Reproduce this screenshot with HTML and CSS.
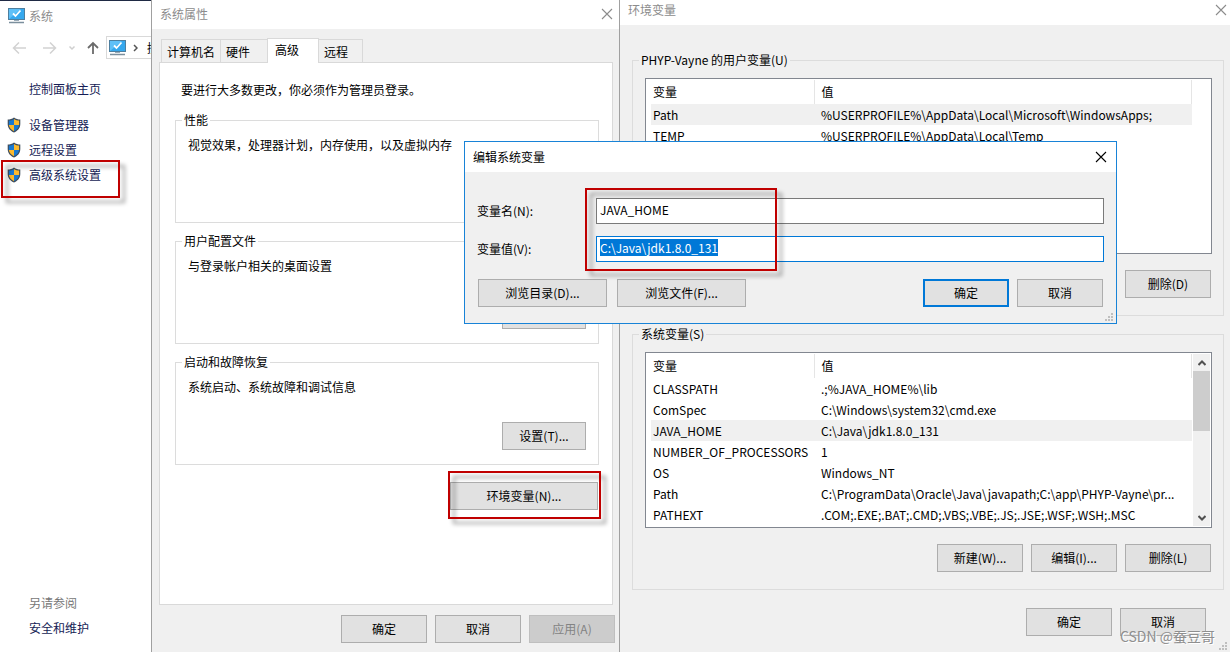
FILE: index.html
```html
<!DOCTYPE html>
<html lang="zh-CN">
<head>
    <meta charset="UTF-8">
    <meta name="viewport" content="width=device-width, initial-scale=1.0">
    <title>环境变量</title>
    <link rel="stylesheet" href="styles.css">
</head>
<body>
    <svg class="symbols" aria-hidden="true">
        <symbol id="monitor" viewBox="0 0 17 16">
            <rect x="0.5" y="0.5" width="16" height="11" fill="#35a8ee" stroke="#4d7f9f"/>
            <path d="M1 11V1h12z" fill="#5fc0f7"/>
            <path d="M5 5.5l2.500 2.500 5-5.500" fill="none" stroke="#fff" stroke-width="1.800"/>
            <path d="M6 12h5v1H6z" fill="#9aabb8"/>
            <path d="M1 14.500h15" stroke="#7b8f9d" stroke-width="1.500"/>
        </symbol>
        <symbol id="shield" viewBox="0 0 14 16">
            <path d="M7 0.500C5 2 3 2.500 0.700 2.500V7c0 4.500 3 7 6.300 8.500 3.300-1.500 6.300-4 6.300-8.500V2.500C11 2.500 9 2 7 0.500z" fill="#3f4d5c"/>
            <path d="M7 1.900C5.300 3 3.700 3.400 1.900 3.500V8H7z" fill="#1879d2"/>
            <path d="M7 1.900C8.700 3 10.300 3.400 12.100 3.500V8H7z" fill="#fdb92c"/>
            <path d="M1.900 8c.4 3 2.300 4.900 5.100 6.200V8z" fill="#fdb92c"/>
            <path d="M12.100 8c-.4 3-2.300 4.900-5.100 6.200V8z" fill="#1879d2"/>
        </symbol>
        <symbol id="close" viewBox="0 0 12 12">
            <path d="M1 1l10 10M11 1L1 11" fill="none" stroke="currentColor" stroke-width="1.100"/>
        </symbol>
        <symbol id="grip" viewBox="0 0 8 8">
            <path d="M6 0h2v2H6zM3 3h2v2H3zM6 3h2v2H6zM0 6h2v2H0zM3 6h2v2H3zM6 6h2v2H6z" fill="#bfbfbf"/>
        </symbol>
    </svg>

    <div class="desktop">
        <!-- 系统 -->
        <aside class="system">
            <div class="system-title">
                <svg class="monitor"><use href="#monitor"/></svg>
                <span>系统</span>
            </div>
            <div class="toolbar">
                <svg class="arrows" viewBox="0 0 88 14" fill="none">
                    <path d="M14 7H1.500M7 1.500L1.500 7l5.500 5.500" stroke="#d2d2d2" stroke-width="1.500"/>
                    <path d="M31 7h12.500M38 1.500L43.500 7 38 12.500" stroke="#d2d2d2" stroke-width="1.500"/>
                    <path d="M57.500 5.500l2.500 2.500 2.500-2.500" stroke="#cfcfcf" stroke-width="1.500"/>
                    <path d="M81 13V2M76 7l5-5 5 5" stroke="#6b6b6b" stroke-width="1.800"/>
                </svg>
                <div class="address">
                    <svg class="monitor"><use href="#monitor"/></svg>
                    <svg class="crumb" viewBox="0 0 5 8"><path d="M1 1l3 3-3 3" fill="none" stroke="#555" stroke-width="1.500"/></svg>
                    <span>控</span>
                </div>
            </div>
            <nav class="side-nav">
                <a class="home" href="#">控制面板主页</a>
                <a href="#"><svg class="shield"><use href="#shield"/></svg>设备管理器</a>
                <a href="#"><svg class="shield"><use href="#shield"/></svg>远程设置</a>
                <a href="#"><svg class="shield"><use href="#shield"/></svg>高级系统设置<span class="mark mark-side"></span></a>
            </nav>
            <div class="see-also">
                <p>另请参阅</p>
                <a href="#">安全和维护</a>
            </div>
        </aside>

        <!-- 系统属性 -->
        <section class="props">
            <header class="title-bar">
                <span>系统属性</span>
                <button class="close" aria-label="关闭"><svg><use href="#close"/></svg></button>
            </header>
            <div class="props-body">
                <div class="tabs" role="tablist">
                    <button class="tab" role="tab">计算机名</button>
                    <button class="tab tab-wide" role="tab">硬件</button>
                    <button class="tab active" role="tab" aria-selected="true">高级</button>
                    <button class="tab tab-last" role="tab">远程</button>
                </div>
                <div class="tab-panel">
                    <p class="notice">要进行大多数更改，你必须作为管理员登录。</p>
                    <fieldset class="group">
                        <legend>性能</legend>
                        <p>视觉效果，处理器计划，内存使用，以及虚拟内存</p>
                    </fieldset>
                    <fieldset class="group">
                        <legend>用户配置文件</legend>
                        <p>与登录帐户相关的桌面设置</p>
                        <button class="btn" aria-label="设置"></button>
                    </fieldset>
                    <fieldset class="group">
                        <legend>启动和故障恢复</legend>
                        <p>系统启动、系统故障和调试信息</p>
                        <button class="btn">设置(T)...</button>
                    </fieldset>
                    <div class="env-row">
                        <button class="btn env-btn">环境变量(N)...</button>
                        <span class="mark mark-env"></span>
                    </div>
                </div>
                <div class="buttons props-buttons">
                    <button class="btn">确定</button>
                    <button class="btn">取消</button>
                    <button class="btn" disabled>应用(A)</button>
                </div>
            </div>
        </section>

        <!-- 环境变量 -->
        <section class="env">
            <header class="title-bar">
                <span>环境变量</span>
                <button class="close" aria-label="关闭"><svg><use href="#close"/></svg></button>
            </header>
            <div class="env-body">
                <fieldset class="vars">
                    <legend>PHYP-Vayne 的用户变量(U)</legend>
                    <div class="list">
                        <table>
                            <thead>
                                <tr><th class="name">变量</th><th>值</th></tr>
                            </thead>
                            <tbody>
                                <tr class="selected"><td>Path</td><td>%USERPROFILE%\AppData\Local\Microsoft\WindowsApps;</td></tr>
                                <tr><td>TEMP</td><td>%USERPROFILE%\AppData\Local\Temp</td></tr>
                            </tbody>
                        </table>
                    </div>
                    <div class="buttons">
                        <button class="btn">删除(D)</button>
                    </div>
                </fieldset>
                <fieldset class="vars">
                    <legend>系统变量(S)</legend>
                    <div class="list">
                        <table>
                            <thead>
                                <tr><th class="name">变量</th><th>值</th></tr>
                            </thead>
                            <tbody>
                                <tr><td>CLASSPATH</td><td>.;%JAVA_HOME%\lib</td></tr>
                                <tr><td>ComSpec</td><td>C:\Windows\system32\cmd.exe</td></tr>
                                <tr class="selected"><td>JAVA_HOME</td><td>C:\Java\jdk1.8.0_131</td></tr>
                                <tr><td>NUMBER_OF_PROCESSORS</td><td>1</td></tr>
                                <tr><td>OS</td><td>Windows_NT</td></tr>
                                <tr><td>Path</td><td>C:\ProgramData\Oracle\Java\javapath;C:\app\PHYP-Vayne\pr...</td></tr>
                                <tr><td>PATHEXT</td><td>.COM;.EXE;.BAT;.CMD;.VBS;.VBE;.JS;.JSE;.WSF;.WSH;.MSC</td></tr>
                            </tbody>
                        </table>
                        <div class="scrollbar">
                            <button aria-label="向上"><svg viewBox="0 0 8 6"><path d="M0.500 5L4 1.500 7.500 5" fill="none" stroke="#505050" stroke-width="2"/></svg></button>
                            <div class="thumb"></div>
                            <button class="down" aria-label="向下"><svg viewBox="0 0 8 6"><path d="M0.500 1L4 4.500 7.500 1" fill="none" stroke="#505050" stroke-width="2"/></svg></button>
                        </div>
                    </div>
                    <div class="buttons">
                        <button class="btn">新建(W)...</button>
                        <button class="btn">编辑(I)...</button>
                        <button class="btn">删除(L)</button>
                    </div>
                </fieldset>
                <div class="buttons env-buttons">
                    <button class="btn">确定</button>
                    <button class="btn">取消</button>
                </div>
            </div>
            <svg class="grip"><use href="#grip"/></svg>
            <div class="watermark">CSDN @蚕豆哥</div>
        </section>

        <!-- 编辑系统变量 -->
        <section class="dialog">
            <header class="title-bar">
                <span>编辑系统变量</span>
                <button class="close" aria-label="关闭"><svg><use href="#close"/></svg></button>
            </header>
            <form class="dialog-body" onsubmit="return false">
                <div class="fields">
                    <label for="varName">变量名(N):</label>
                    <input type="text" id="varName" value="JAVA_HOME" spellcheck="false">
                    <label for="varValue">变量值(V):</label>
                    <input type="text" id="varValue" value="C:\Java\jdk1.8.0_131" spellcheck="false">
                    <span class="mark mark-fields"></span>
                </div>
                <div class="buttons dialog-buttons">
                    <button type="button" class="btn browse">浏览目录(D)...</button>
                    <button type="button" class="btn browse">浏览文件(F)...</button>
                    <button type="submit" class="btn default">确定</button>
                    <button type="button" class="btn">取消</button>
                </div>
            </form>
            <svg class="grip"><use href="#grip"/></svg>
        </section>
    </div>

    <script>
        // 打开时选中变量值
        const varValue = document.getElementById('varValue');
        varValue.focus();
        varValue.select();
    </script>
</body>
</html>
```
FILE: styles.css
```css
* {
    margin: 0;
    padding: 0;
    box-sizing: border-box;
}
body {
    background: #f0f0f0;
    color: #000;
    font-family: "Noto Sans CJK SC", sans-serif;
    font-size: 12px;
    line-height: 16px;
}
button, input {
    font: inherit;
    color: inherit;
}
a {
    color: #151c55;
    text-decoration: none;
}
svg {
    display: block;
    flex: none;
}
.symbols {
    position: absolute;
    width: 0;
    height: 0;
}
.desktop {
    position: relative;
    display: flex;
    min-height: 100vh;
}

/* 系统 */
.system {
    width: 151px;
    flex: none;
    display: flex;
    flex-direction: column;
    background: #fff;
    border-top: 1px solid #1f2a44;
    overflow: hidden;
}
.system-title {
    display: flex;
    align-items: center;
    gap: 4px;
    padding: 7px 8px 6px;
    color: #8c8c8c;
}
.monitor {
    width: 17px;
    height: 16px;
}
.toolbar {
    display: flex;
    align-items: center;
    margin-top: 6px;
    padding-left: 12px;
}
.arrows {
    width: 88px;
    height: 14px;
    margin-right: 6px;
}
.address {
    flex: 1;
    display: flex;
    align-items: center;
    height: 23px;
    padding-left: 2px;
    border: 1px solid #d9d9d9;
    border-right: 0;
    white-space: nowrap;
    overflow: hidden;
}
.crumb {
    width: 5px;
    height: 8px;
    margin: 0 9px 0 7px;
}
.side-nav {
    display: flex;
    flex-direction: column;
    gap: 9px;
    margin-top: 22px;
}
.side-nav a {
    position: relative;
    display: flex;
    align-items: center;
    gap: 8px;
    padding-left: 7px;
}
.side-nav .home {
    padding-left: 29px;
    margin-bottom: 11px;
}
.shield {
    width: 14px;
    height: 16px;
}
.see-also {
    margin-top: auto;
    padding: 0 0 16px 29px;
}
.see-also p {
    color: #777;
    margin-bottom: 9px;
}

/* 红色标记框 */
.mark {
    position: absolute;
    border: 2px solid #c00000;
    filter: drop-shadow(5px 5px 2px rgba(0, 0, 0, 0.4));
    pointer-events: none;
}
.mark-side {
    left: 1px;
    top: -7px;
    width: 119px;
    height: 38px;
}
.mark-env {
    inset: -11px -3px -9px -2px;
}
.mark-fields {
    left: 108px;
    top: -10px;
    width: 192px;
    height: 83px;
}

/* 窗口 */
.title-bar {
    display: flex;
    align-items: center;
    justify-content: space-between;
    background: #fff;
    color: #8c8c8c;
    padding: 0 6px 2px 8px;
}
.close {
    border: 0;
    background: none;
}
.close svg {
    width: 12px;
    height: 12px;
}
.btn {
    min-width: 86px;
    height: 28px;
    background: #e1e1e1;
    border: 1px solid #adadad;
}
.btn:hover {
    background: #e5f1fb;
    border-color: #0078d7;
}
.btn:disabled {
    background: #ccc;
    border-color: #bfbfbf;
    color: #838383;
}
.btn.default {
    border: 2px solid #0078d7;
}
.buttons {
    display: flex;
    justify-content: flex-end;
    gap: 8px;
}
fieldset {
    min-width: 0;
    border: 1px solid #dcdcdc;
}
legend {
    margin-left: -6px;
    padding: 0 2px;
}
.grip {
    position: absolute;
    right: 3px;
    bottom: 2px;
    width: 8px;
    height: 8px;
}

/* 系统属性 */
.props {
    width: 469px;
    flex: none;
    display: flex;
    flex-direction: column;
    border: solid #a0a0a0;
    border-width: 0 1px;
}
.props .title-bar {
    height: 29px;
}
.props-body {
    flex: 1;
    display: flex;
    flex-direction: column;
    padding: 9px 4px 9px 7px;
}
.tabs {
    display: flex;
    align-items: flex-end;
    padding-left: 2px;
}
.tab {
    height: 23px;
    padding: 2px 5px 0;
    background: #f0f0f0;
    border: 1px solid #d9d9d9;
    border-width: 1px 0 0 1px;
    text-align: left;
}
.tab-wide {
    padding-right: 17px;
}
.tab-last {
    padding-right: 14px;
    border-width: 1px 1px 0 0;
}
.tab.active {
    position: relative;
    height: 25px;
    margin-bottom: -1px;
    padding: 0 19px 2px 7px;
    background: #fff;
    border-width: 1px 1px 0;
}
.tab-panel {
    flex: 1;
    margin-right: 2px;
    padding: 19px 13px 0 15px;
    background: #fff;
    border: 1px solid #d9d9d9;
}
.notice {
    padding-left: 6px;
    margin-bottom: 14px;
}
.group {
    display: flex;
    flex-direction: column;
    height: 111px;
    margin-bottom: 10px;
    padding: 9px 12px 14px;
}
.group .btn {
    width: 84px;
    min-width: 0;
    margin-top: auto;
    align-self: flex-end;
}
.env-row {
    position: relative;
    width: 148px;
    margin: 17px 1px 0 auto;
}
.env-btn {
    width: 100%;
}
.props-buttons {
    margin-top: 10px;
}

/* 环境变量 */
.env {
    position: relative;
    flex: 1;
    min-width: 0;
}
.env .title-bar {
    height: 25px;
    padding: 0 3px 6px 8px;
}
.env-body {
    padding: 27px 6px 16px 12px;
}
.vars {
    margin-bottom: 10px;
    padding: 10px 11px 17px 12px;
}
.vars .buttons {
    padding-right: 1px;
}
.list {
    display: flex;
    height: 176px;
    margin-bottom: 16px;
    padding: 1px 1px 0 5px;
    background: #fff;
    border: 1px solid #828790;
    overflow: hidden;
}
.list table {
    flex: 1;
    align-self: flex-start;
    table-layout: fixed;
    width: 100%;
    margin-right: 18px;
    border-collapse: collapse;
}
.list table:not(:last-child) {
    margin-right: 1px;
}
.list th, .list td {
    height: 21px;
    padding: 0 0 0 7px;
    text-align: left;
    font-weight: normal;
    white-space: nowrap;
}
.list th {
    height: 24px;
    border-right: 1px solid #e5e5e5;
}
.list .name {
    width: 163px;
}
.list th:first-child, .list td:first-child {
    padding-left: 2px;
}
.list .selected {
    background: #f0f0f0;
}
.scrollbar {
    width: 17px;
    flex: none;
    display: flex;
    flex-direction: column;
    margin-bottom: 1px;
    background: #f0f0f0;
}
.scrollbar button {
    display: flex;
    align-items: center;
    justify-content: center;
    height: 17px;
    border: 0;
    background: none;
}
.scrollbar svg {
    width: 8px;
    height: 6px;
}
.scrollbar .down {
    margin-top: auto;
}
.thumb {
    height: 60px;
    background: #cdcdcd;
}
.env-buttons {
    padding: 8px 18px 0 0;
}
.watermark {
    position: absolute;
    right: 15px;
    bottom: 6px;
    color: #8f8f8f;
    font-size: 14px;
    line-height: 20px;
    text-shadow: 1px 1px 0 #fff;
}

/* 编辑系统变量 */
.dialog {
    position: absolute;
    left: 464px;
    top: 141px;
    width: 653px;
    background: #f0f0f0;
    border: 1px solid #1883d7;
}
.dialog .title-bar {
    height: 30px;
    padding: 0 9px 0 8px;
    color: #000;
}
.dialog-body {
    padding: 26px 12px 16px;
}
.fields {
    position: relative;
    display: grid;
    grid-template-columns: 119px 1fr;
    align-items: center;
    row-gap: 12px;
}
.fields input {
    height: 26px;
    padding: 0 3px 3px;
    background: #fff;
    border: 1px solid #7a7a7a;
    outline: 0;
}
.fields input:focus {
    border-color: #0078d7;
}
.fields input::selection {
    background: #0078d7;
    color: #fff;
}
.dialog-buttons {
    justify-content: flex-start;
    margin-top: 17px;
    padding: 0 1px;
}
.browse {
    width: 129px;
    margin-right: 2px;
}
.dialog-buttons .default {
    margin-left: auto;
}
```
